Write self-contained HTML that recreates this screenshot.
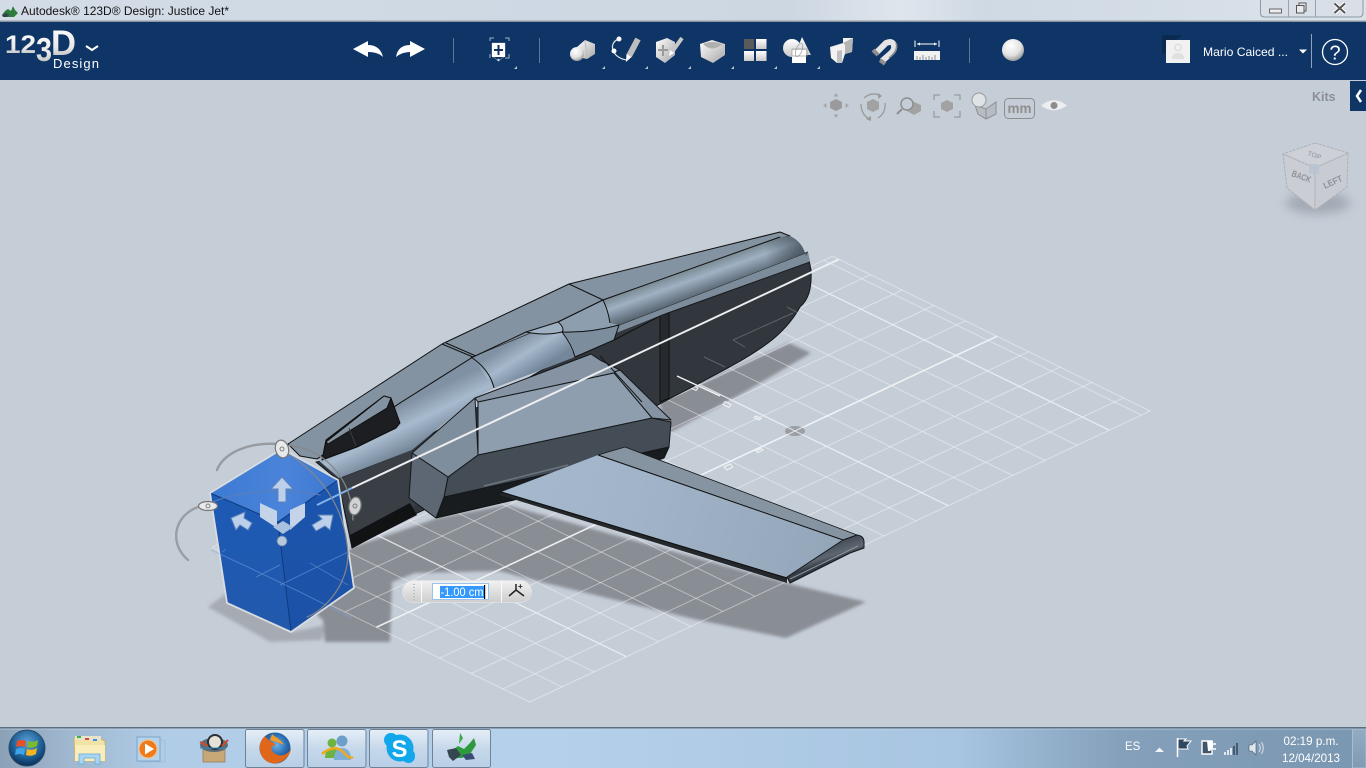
<!DOCTYPE html>
<html lang="es">
<head>
<meta charset="utf-8">
<title>Autodesk 123D Design: Justice Jet</title>
<style>
html,body{margin:0;padding:0;width:1366px;height:768px;overflow:hidden;background:#c5cdd7}
svg{display:block;font-family:"Liberation Sans",sans-serif}
</style>
</head>
<body>
<svg width="1366" height="768" viewBox="0 0 1366 768" xmlns="http://www.w3.org/2000/svg">
<defs>
<linearGradient id="tb" x1="0" x2="1" y1="0" y2="0"><stop offset="0" stop-color="#d3dce6"/><stop offset=".2" stop-color="#d0dae5"/><stop offset=".58" stop-color="#cdd7e2"/><stop offset=".66" stop-color="#dfe5ec"/><stop offset=".72" stop-color="#cfd9e4"/><stop offset="1" stop-color="#dbe3ea"/></linearGradient>
<linearGradient id="task" x1="0" x2="1" y1="0" y2="0"><stop offset="0" stop-color="#8ba1b8"/><stop offset=".05" stop-color="#9fb7cf"/><stop offset=".12" stop-color="#b0cce7"/><stop offset=".4" stop-color="#b5d0ea"/><stop offset=".7" stop-color="#a8c5e1"/><stop offset=".82" stop-color="#84a0bb"/><stop offset="1" stop-color="#7a97b1"/></linearGradient>
<linearGradient id="btn" x1="0" x2="0" y1="0" y2="1"><stop offset="0" stop-color="#e6eff8"/><stop offset=".5" stop-color="#c6d8ea"/><stop offset="1" stop-color="#b8cfe6"/></linearGradient>
<linearGradient id="logo" x1="0" x2="0" y1="0" y2="1"><stop offset="0" stop-color="#fff"/><stop offset=".6" stop-color="#e8e8e8"/><stop offset="1" stop-color="#a8a8a8"/></linearGradient>
<linearGradient id="wg" x1="0" x2="1" y1="0" y2="1"><stop offset="0" stop-color="#fff"/><stop offset="1" stop-color="#a6a6a6"/></linearGradient>
<linearGradient id="wv" x1="0" x2="0" y1="0" y2="1"><stop offset="0" stop-color="#fff"/><stop offset="1" stop-color="#c8c8c8"/></linearGradient>
<radialGradient id="sph" cx=".4" cy=".3" r=".75"><stop offset="0" stop-color="#fff"/><stop offset=".6" stop-color="#e2e2e2"/><stop offset="1" stop-color="#8e8e8e"/></radialGradient>
<linearGradient id="band1" gradientUnits="userSpaceOnUse" x1="395" y1="408" x2="415" y2="450"><stop offset="0" stop-color="#7f91a2"/><stop offset=".45" stop-color="#a8bace"/><stop offset="1" stop-color="#6f8193"/></linearGradient>
<linearGradient id="band2" gradientUnits="userSpaceOnUse" x1="515" y1="340" x2="535" y2="372"><stop offset="0" stop-color="#7f91a2"/><stop offset=".45" stop-color="#a6b8cb"/><stop offset="1" stop-color="#74869a"/></linearGradient>
<linearGradient id="band3" gradientUnits="userSpaceOnUse" x1="690" y1="268" x2="700" y2="296"><stop offset="0" stop-color="#76878f"/><stop offset=".4" stop-color="#9fb1c3"/><stop offset="1" stop-color="#55626e"/></linearGradient>
<linearGradient id="bandend" gradientUnits="userSpaceOnUse" x1="765" y1="255" x2="806" y2="245"><stop offset="0" stop-color="#3a444e" stop-opacity="0"/><stop offset="1" stop-color="#3a444e" stop-opacity=".75"/></linearGradient>
<linearGradient id="wing" gradientUnits="userSpaceOnUse" x1="520" y1="470" x2="830" y2="560"><stop offset="0" stop-color="#a5b8cd"/><stop offset=".35" stop-color="#a2b4c9"/><stop offset="1" stop-color="#94a6b9"/></linearGradient>
<linearGradient id="tip" gradientUnits="userSpaceOnUse" x1="850" y1="535" x2="856" y2="553"><stop offset="0" stop-color="#3f4751"/><stop offset=".7" stop-color="#5d6772"/><stop offset="1" stop-color="#343a42"/></linearGradient>
<linearGradient id="inp" x1="0" x2="0" y1="0" y2="1"><stop offset="0" stop-color="#f2f2f2"/><stop offset="1" stop-color="#cdcdcd"/></linearGradient>
<linearGradient id="ctop" x1="0" x2="1" y1="0" y2="0"><stop offset="0" stop-color="#3d7ad2"/><stop offset=".6" stop-color="#4a84da"/><stop offset="1" stop-color="#3c76cf"/></linearGradient>
<linearGradient id="cleft" x1="0" x2="0" y1="0" y2="1"><stop offset="0" stop-color="#1d5ab5"/><stop offset="1" stop-color="#2259ac"/></linearGradient>
<linearGradient id="cright" x1="0" x2="0" y1="0" y2="1"><stop offset="0" stop-color="#1b55ad"/><stop offset="1" stop-color="#1c52a6"/></linearGradient>
<radialGradient id="orb" cx=".5" cy=".35" r=".65"><stop offset="0" stop-color="#5ba3d8"/><stop offset=".65" stop-color="#1c5d94"/><stop offset="1" stop-color="#0b2f56"/></radialGradient>
<radialGradient id="fox" cx=".55" cy=".4" r=".6"><stop offset="0" stop-color="#6fb3e6"/><stop offset=".55" stop-color="#2a6db2"/><stop offset="1" stop-color="#173f7a"/></radialGradient>
<linearGradient id="sd" x1="0" x2="0" y1="0" y2="1"><stop offset="0" stop-color="#93acc4"/><stop offset="1" stop-color="#7f9ab3"/></linearGradient>
<filter id="b2" x="-20%" y="-20%" width="140%" height="140%"><feGaussianBlur stdDeviation="1.6"/></filter>
<filter id="b5" x="-40%" y="-40%" width="180%" height="180%"><feGaussianBlur stdDeviation="5"/></filter>
</defs>

<!-- viewport -->
<rect x="0" y="80" width="1366" height="648" fill="#c5cdd7"/>

<!-- shadows -->
<g filter="url(#b2)">
<path d="M350,548 438,518 507,505 786,583 866,602 786,638 698,620 533,580 500,571 415,573 392,582 390,642 325,642 323,620 300,600Z" fill="#898d94"/>
<path d="M660,402 789,343 811,353 743,393 671,432 664,430Z" fill="#898d94"/>
<path d="M208,607 228,592 292,632 325,625 322,640 270,642Z" fill="#a6abb3"/>
</g>

<!-- grid minor -->
<g stroke="#fff" stroke-opacity=".42" stroke-width="1" fill="none">
<path d="M832.6,256.2 1150.2,411M823.9,260.3 1141.5,415.1M759.5,290.5 1077.1,445.3M727.3,305.6 1044.9,460.4M695.1,320.7 1012.7,475.5M662.9,335.8 980.5,490.6M598.5,366 916.1,520.8M566.3,381.1 883.9,535.9M534.1,396.2 851.7,551M501.9,411.3 819.5,566.1M437.5,441.5 755.1,596.3M405.3,456.6 722.9,611.4M373.1,471.7 690.7,626.5M340.9,486.8 658.5,641.6M276.5,517 594.1,671.8M244.3,532.1 561.9,686.9M212.1,547.2 529.7,702"/>
<path d="M212.1,547.2 832.6,256.2M250,565.7 870.5,274.7M281.6,581.1 902.1,290.1M313.2,596.5 933.7,305.5M344.8,611.9 965.3,320.9M408,642.7 1028.5,351.7M439.6,658.1 1060.1,367.1M471.2,673.5 1091.7,382.5M502.8,688.9 1123.3,397.9M529.7,702 1150.2,411"/>
</g>
<!-- grid major -->
<g stroke="#f2f4f6" stroke-opacity=".8" fill="none">
<path d="M791.7,275.4 1109.3,430.2M630.7,350.9 948.3,505.7M469.7,426.4 787.3,581.2M308.7,501.9 626.3,656.7" stroke-width="1.300"/>
<path d="M376.4,627.3 996.9,336.3" stroke-width="1.600" stroke-opacity=".95"/>
</g>
<!-- axis labels -->
<g fill="none" stroke="#f2f4f6" stroke-width="1">
<path d="M693,385.500 l5,2.500 -2,2.500 -5,-2.500z"/>
<path d="M725,401.500 l6,3 -2,3 -6,-3z"/>
<path d="M756,416 l5,2.500 -2,1.500 -5,-2.500z"/>
<path d="M756,451 l5,-2.500 2,1.500 -5,2.500z"/>
<path d="M724,467 l6,-3 3,3 -6,3z"/>
</g>
<ellipse cx="795" cy="431" rx="10" ry="5" fill="#9b9fa5"/>
<path d="M785,426 805,436M785,436 805,426" stroke="#dfe3e7" stroke-width="1"/>

<!-- JET -->
<g stroke-linejoin="round">
<!-- dark hull -->
<path d="M316,462 L412,445 620,325 808,255 L811,270 C812,290 808,300 800,307 C790,325 776,337 768,343 C745,360 715,375 671,398 L652,408 417,513 352,548 338,480Z" fill="#31373d" stroke="#14171a" stroke-width="1"/>
<path d="M338,480 412,450 430,480 417,505 351,535Z" fill="#3a3f46"/>
<path d="M350,535 410,503 417,515 352,548Z" fill="#101214"/>
<path d="M660,315 669,312 669,398 660,402Z" fill="#262a2f" stroke="#111" stroke-width="1"/>
<path d="M614,340 660,316" stroke="#111" stroke-width="1" fill="none"/>
<path d="M619,325 808,252 810,262 669,312 616,333Z" fill="#7c8c9a"/>
<path d="M619,325 808,252" stroke="#222" stroke-width="1" fill="none"/>
<path d="M660,316 810,262" stroke="#1a1d20" stroke-width="1" fill="none"/>
<path d="M704,357 725,367M733,340 793,313M787,307 798,313M733,340 745,347" stroke="#fff" stroke-opacity=".22" stroke-width="1" fill="none"/>
<path d="M677,376 720,396" stroke="#f2f4f6" stroke-width="1.400" fill="none"/>

<!-- upper flat -->
<path d="M288,444 442,344 569,284 780,232 790,236 780,238 603,300 558,322 473,357 400,403 317,459 300,456Z" fill="#8493a1" stroke="#111" stroke-width="1"/>
<!-- rounded band -->
<path d="M317,459 400,403 473,357 494,388 475,398 412,450 339,478Z" fill="url(#band1)"/>
<path d="M473,357 558,322 575,357 494,388Z" fill="url(#band2)"/>
<path d="M558,322 603,300 610,323 619,325 614,340 575,357Z" fill="#8d9eae"/>
<path d="M603,300 780,237 790,236 C798,240 803,245 806,256 L808,252 619,325 610,323Z" fill="url(#band3)"/>
<path d="M603,300 780,237 790,236 C798,240 803,245 806,256 L808,252 619,325 610,323Z" fill="url(#bandend)"/>
<path d="M526,332 558,322 C563,326 564,330 562,332 Q545,336 526,332Z" fill="#9fb0c1" stroke="#111" stroke-width="1"/>
<path d="M562,332 Q590,333 619,325 L614,340 575,357 Q572,345 562,332Z" fill="#7c8d9d" stroke="#111" stroke-width="1"/>
<path d="M558,322 603,300M442,344 473,357 M446,343 476,356M471,357 Q490,370 494,388M569,284 603,300 Q608,310 610,323" fill="none" stroke="#111" stroke-width="1"/>
<path d="M317,459 400,403 473,357 526,332M603,300 780,237" fill="none" stroke="#111" stroke-width="1"/>
<!-- cockpit -->
<path d="M326,440 384,396 391,398 400,423 396,428 357,447 322,460Z" fill="#1c1e21" stroke="#0b0c0d" stroke-width="1"/>
<path d="M326,442 384,396 391,398 387,408 328,444Z" fill="#8493a1" stroke="#111" stroke-width="1"/>
<path d="M349,428 356,446" stroke="#3c4045" stroke-width="1" fill="none"/>

<!-- wing root -->
<path d="M444,497 669,447 664,458 600,480 436,518Z" fill="#191c1f" stroke="#0f1113" stroke-width="1"/>
<path d="M478,455 652,418 671,422 669,447 444,497 448,477Z" fill="#444c56" stroke="#14171a" stroke-width="1"/>
<path d="M475,398 591,354 600,360 620,370 671,420 652,418 614,373 478,402Z" fill="#8593a2" stroke="#14171a" stroke-width="1"/>
<path d="M478,402 614,373 652,418 478,455Z" fill="#8f9eae" stroke="#14171a" stroke-width="1"/>
<path d="M600,356 642,402M614,372 620,370" stroke="#14171a" stroke-width="1" fill="none"/>
<path d="M475,398 478,455 448,477 412,453Z" fill="#7f8e9c" stroke="#14171a" stroke-width="1"/>
<path d="M412,453 448,477 444,497 436,518 409,498Z" fill="#5d6773" stroke="#14171a" stroke-width="1"/>
<path d="M484,486 568,465" stroke="#6c747e" stroke-width="1.500" fill="none"/>

<!-- wing -->
<path d="M501,492 787,578 787,583 500,495Z" fill="#24282c"/>
<path d="M598,455 625,447 857,535 843,540Z" fill="#8694a2" stroke="#14171a" stroke-width=".8"/>
<path d="M501,492 598,455 843,540 787,577Z" fill="url(#wing)"/>
<path d="M598,455 843,540" stroke="#111" stroke-width="1" fill="none"/>
<path d="M501,492 787,578" stroke="#111" stroke-width="1.200" fill="none"/>
<path d="M843,540 857,535 Q864,536 864,542 L864,548 850,553 790,583 787,577Z" fill="url(#tip)" stroke="#14171a" stroke-width="1"/>
<path d="M790,579 858,546" stroke="#8a939c" stroke-width="1" fill="none"/>
</g>

<!-- bright axis over jet -->
<path d="M838.9,259.3 352,488" stroke="#eceef0" stroke-width="2" fill="none"/>

<!-- blue cube -->
<g stroke-linejoin="round">
<path d="M282,449 338,480 278,522 210,493Z" fill="url(#ctop)"/>
<path d="M210,493 278,522 291,632 227,603Z" fill="url(#cleft)"/>
<path d="M278,522 338,480 354,588 291,632Z" fill="url(#cright)"/>
<path d="M210,493 278,522 338,480M278,522 291,632" stroke="#0f3a7d" stroke-width="1" fill="none"/>
<path d="M282,449 338,480 354,588 291,632 227,603 210,493Z" fill="none" stroke="#d9dde2" stroke-width="1.800"/>
<path d="M317,505 352,488" stroke="#84b2ee" stroke-width="2" fill="none"/>
<path d="M211,550 250,568 300,592 352,618M222,552 226,549M280,565 256,577M280,585 348,552M310,563 348,585" stroke="#7fa8e0" stroke-opacity=".45" stroke-width="1" fill="none"/>
</g>

<!-- manipulator arcs -->
<g fill="none" stroke-linecap="round">
<path d="M217,470 C224,452 250,442 278,444" stroke="#8b8e92" stroke-width="2.400" stroke-opacity=".8" stroke-dasharray="2 .6"/>
<path d="M198,507 C172,517 170,545 188,560" stroke="#8b8e92" stroke-width="2.400" stroke-opacity=".75" stroke-dasharray="2 .6"/>
<path d="M285,445 C325,448 352,478 353,520" stroke="#85878a" stroke-width="1.300"/>
<path d="M282,450 C325,475 345,510 348,553 C348,585 325,610 307,617" stroke="#85878a" stroke-width="1.200"/>
<path d="M210,503 C240,490 285,488 320,495" stroke="#5c7fb8" stroke-width="1"/>
</g>
<g stroke="#777" stroke-width="1.200" fill="#e8e9eb">
<ellipse cx="282" cy="449" rx="6.500" ry="9" transform="rotate(-15 282 449)"/>
<ellipse cx="208" cy="506" rx="9.500" ry="4.500"/>
<ellipse cx="355" cy="506" rx="6" ry="9" transform="rotate(10 355 506)" fill="#d0d2d4"/>
</g>
<g fill="none" stroke="#666" stroke-width=".8"><circle cx="282" cy="449" r="2"/><circle cx="208" cy="506" r="2"/><circle cx="355" cy="506" r="2"/></g>

<!-- move arrows -->
<g fill="#bcd0ec" stroke="#5f82b6" stroke-width="1">
<path d="M282,477 L293,489 286,489 286,502 278,502 278,489 271,489Z"/>
<path d="M231,518 L245,512 244,518 252,523 248,530 240,525 236,530Z"/>
<path d="M333,515 L330,530 325,526 316,531 312,525 322,519 318,515Z"/>
</g>
<g fill="#c4d3e8">
<path d="M260,503 277,511 277,528 260,517Z"/>
<path d="M305,503 290,510 290,530 305,517Z"/>
<path d="M283,521 293,527 283,534 273,527Z" fill="#a9c0df"/>
<circle cx="282" cy="541" r="5" fill="#b7c7dc" stroke="#5f7ca8" stroke-width=".8"/>
</g>

<!-- input box -->
<rect x="402.500" y="580.500" width="129" height="22" rx="11" fill="url(#inp)" stroke="#dfe2e6" stroke-width=".8"/>
<path d="M421.500,581 V602M501.500,581 V602" stroke="#fafafa" stroke-width="1"/>
<path d="M414,584 V600" stroke="#bdbdbd" stroke-width="2" stroke-dasharray="1 2"/>
<rect x="432.500" y="583.500" width="56" height="16" fill="#fff" stroke="#9cc3ea" stroke-width="1"/>
<rect x="440" y="586" width="44" height="12" fill="#3399ff"/>
<text x="440.500" y="596" font-size="11.500" fill="#fff" textLength="43" lengthAdjust="spacingAndGlyphs">-1.00 cm</text>
<rect x="484" y="585" width="1.200" height="14" fill="#000"/>
<path d="M516,590 V584M516,590 L509,596M516,590 L524,596" stroke="#222" stroke-width="1.500" fill="none"/>
<text x="518" y="589" font-size="8" font-weight="bold" fill="#222">+</text>

<!-- title bar -->
<rect x="0" y="0" width="1366" height="21" fill="url(#tb)"/>
<rect x="0" y="20.500" width="1366" height="1.500" fill="#8c96a2"/>
<path d="M2,15 5,11 8,9 11,11 13,6 15,10 18,13 14,17 6,17Z" fill="#2f7d3a"/>
<path d="M2,15 6,13 9,15 7,17 3,17Z" fill="#35424c"/>
<text x="21" y="15" font-size="12" fill="#111" textLength="208" lengthAdjust="spacingAndGlyphs">Autodesk® 123D® Design: Justice Jet*</text>
<path d="M1260.500,0 V13 Q1260.500,17 1265,17 H1359 Q1363,17 1363,13 V0" fill="#d8dfe7" stroke="#8e98a3"/>
<path d="M1288.500,0 V17M1315.500,0 V17" stroke="#98a2ad"/>
<rect x="1269.500" y="9" width="12" height="4" fill="#eee" stroke="#666"/>
<rect x="1299" y="3" width="7" height="8" fill="#e8ecf0" stroke="#555"/>
<rect x="1296.500" y="5.500" width="7.500" height="7.500" fill="#e8ecf0" stroke="#555"/>
<path d="M1334.500,3.500 L1345,13M1345,3.500 L1334.500,13" stroke="#fff" stroke-width="4"/>
<path d="M1334.500,3.500 L1345,13M1345,3.500 L1334.500,13" stroke="#555" stroke-width="2"/>

<!-- toolbar -->
<rect x="0" y="22" width="1366" height="58" fill="#0e3566"/>
<text x="5" y="53" font-size="25" font-weight="bold" fill="url(#logo)" textLength="31" lengthAdjust="spacingAndGlyphs">12</text>
<text x="36" y="61" font-size="33" font-weight="bold" fill="url(#logo)" textLength="16" lengthAdjust="spacingAndGlyphs">3</text>
<text x="51" y="55" font-size="35" font-weight="bold" fill="url(#logo)" textLength="25" lengthAdjust="spacingAndGlyphs">D</text>
<path d="M86,46 92,50 98,46" fill="none" stroke="#fff" stroke-width="2"/>
<text x="53" y="68" font-size="13" fill="#fff" letter-spacing="1" textLength="47">Design</text>

<path d="M353,49 L368,41 V45 Q380,45 383,57 Q378,52 368,52 V57Z" fill="#fff"/>
<path d="M425,49 L410,41 V45 Q398,45 396,57 Q402,52 410,52 V57Z" fill="#fff"/>
<path d="M453.500,38 V63M539.500,38 V63M969.500,38 V63" stroke="#5d7897" stroke-width="1"/>

<!-- snap -->
<path d="M490,41 V38 H494M505,38 H509 V41M509,54 V58 H505M490,54 V58" fill="none" stroke="#9fb2c8" stroke-width="1"/>
<path d="M492,43 H505 V56 L498.500,61 492,56Z" fill="none" stroke="#7f97b3" stroke-width=".6"/>
<rect x="492" y="43" width="13" height="14" fill="#fff"/>
<path d="M498.500,45 V55M494,50 H503" stroke="#0e3566" stroke-width="2"/>
<circle cx="498.500" cy="60" r="1.200" fill="#cfd8e3"/>

<!-- icon: primitives -->
<path d="M577,47 585,40 595,44 595,54 587,59 577,57Z" fill="url(#wg)"/>
<path d="M585,40 587,59" stroke="#bbb" stroke-width="1"/>
<circle cx="577" cy="54" r="7" fill="url(#sph)"/>
<!-- sketch -->
<path d="M619,39 C608,42 611,58 627,60" fill="none" stroke="#e8e8e8" stroke-width="1.200"/>
<circle cx="619" cy="39" r="2.500" fill="#fff"/><circle cx="614" cy="51" r="2.500" fill="#fff"/>
<path d="M638,39 L629,56" stroke="#bdbdbd" stroke-width="6"/>
<path d="M626.500,54 L631.500,57 626,62Z" fill="#fff"/>
<!-- construct -->
<path d="M656,42 667,38 675,42 675,55 665,63 656,57Z" fill="url(#wg)"/>
<path d="M658,50 H668M663,45 V56" stroke="#9a9a9a" stroke-width="2"/>
<path d="M682,38 L672,52" stroke="#c8c8c8" stroke-width="4"/>
<path d="M670,50 L674,53 669,56Z" fill="#fff"/>
<!-- modify -->
<path d="M700,44 712,40 725,44 725,55 713,63 701,57Z" fill="url(#wg)"/>
<path d="M703,44 Q712,53 722,44 Q712,40 703,44Z" fill="#b0b0b0"/>
<!-- pattern -->
<rect x="744" y="39" width="10" height="10" fill="#5a5a5a"/>
<rect x="756" y="39" width="10.500" height="10" fill="url(#wv)"/>
<rect x="744" y="51" width="10" height="10" fill="url(#wv)"/>
<rect x="756" y="51" width="10.500" height="10" fill="url(#wv)"/>
<!-- combine -->
<circle cx="792" cy="48" r="9" fill="url(#wv)"/>
<path d="M802,37 L811,55 H795Z" fill="url(#wv)"/>
<rect x="792" y="50" width="14" height="13" fill="#fff"/>
<rect x="792" y="49" width="15" height="7" fill="none" stroke="#999" stroke-width=".7"/>
<ellipse cx="799" cy="50" rx="3" ry="7" fill="none" stroke="#999" stroke-width=".7" transform="rotate(20 799 50)"/>
<!-- group -->
<path d="M830,47 843,43 843,38 853,38 852,52 845,54 842,63 837,63 831,58Z" fill="#f2f2f2"/>
<path d="M843,43 847,41 853,38 852,52 845,54 845,45Z" fill="#b4b4b4"/>
<path d="M837,51 842,50 842,63 837,63Z" fill="#c0c0c0"/>
<!-- magnet -->
<path d="M876,53 L886,43 Q893,40 894,46 Q895,50 890,54 L882,61" fill="none" stroke="#e4e4e4" stroke-width="6"/>
<path d="M873,50 L878,55M880,60 L885,64" stroke="#8e8e8e" stroke-width="4"/>
<path d="M889,58 Q899,50 896,43" fill="none" stroke="#8a8a8a" stroke-width="1.500"/>
<!-- measure -->
<path d="M915,40.500 V47M939,40.500 V47M917,44 H937" stroke="#fff" stroke-width="1" fill="none"/>
<path d="M917,44 920,42.500 V45.500ZM937,44 934,42.500 V45.500Z" fill="#fff"/>
<rect x="914" y="51" width="26" height="9" fill="#f2f2f2"/>
<path d="M917,60 V56M920,60 V57M923,60 V55M926,60 V57M929,60 V56M932,60 V57M935,60 V55" stroke="#777" stroke-width=".8"/>
<!-- material -->
<circle cx="1013" cy="50" r="11" fill="url(#sph)"/>
<!-- corner ticks -->
<g fill="#b9c6d6">
<path d="M517,66 V69 H514Z"/><path d="M605,66 V69 H602Z"/><path d="M648,66 V69 H645Z"/><path d="M691,66 V69 H688Z"/><path d="M734,66 V69 H731Z"/><path d="M777,66 V69 H774Z"/><path d="M820,66 V69 H817Z"/>
</g>

<!-- user -->
<path d="M1162,35 H1182 L1176,40 1166,52 1162,55Z" fill="#0a2a50"/>
<rect x="1166" y="40" width="24" height="23" fill="#f1f1f1"/>
<circle cx="1178" cy="47.500" r="3.200" fill="none" stroke="#dfdfdf" stroke-width="1.600"/>
<path d="M1172,59 Q1172,53 1178,53 Q1184,53 1184,59Z" fill="#dfdfdf"/>
<text x="1203" y="56" font-size="12" fill="#fff" textLength="85" lengthAdjust="spacingAndGlyphs">Mario Caiced ...</text>
<path d="M1299,49.500 H1307 L1303,53.500Z" fill="#fff"/>
<path d="M1311.500,34 V68" stroke="#8ea3bc" stroke-width="1"/>
<circle cx="1335" cy="52" r="12.500" fill="none" stroke="#fff" stroke-width="1.300"/>
<text x="1335" y="59.500" font-size="20" fill="#fff" text-anchor="middle">?</text>

<!-- view controls -->
<g fill="#9a9a9a">
<path d="M836,99 842,102 842,108 836,111 830,108 830,102Z"/>
<path d="M836,93 838.500,96.500 H833.500ZM836,118 838.500,114.500 H833.500ZM823,105.500 826.500,103 V108ZM849,105.500 845.500,103 V108Z" fill="#a6a6a6"/>
<path d="M873,99 879,102 879,109 873,112 867,109 867,102Z" fill="#a2a2a2"/>
<path d="M864,98 Q872,91 881,96M885,103 Q886,113 878,118 M869,119 Q861,114 861,104" fill="none" stroke="#9a9a9a" stroke-width="1.300"/>
<path d="M882,96 878,93 878,99ZM866,119 871,116 871,121Z"/>
<path d="M914,102 921,105 921,111 914,115 907,111 907,105Z" fill="#a2a2a2"/>
<circle cx="907" cy="104" r="6" fill="#c5cdd7" stroke="#8e8e8e" stroke-width="1.500"/>
<path d="M902,109 L897,114" stroke="#8e8e8e" stroke-width="2"/>
<path d="M947,100 953,103 953,109 947,112 941,109 941,103Z" fill="#a2a2a2"/>
<path d="M934,100 V95 H940M954,95 H960 V100M960,111 V117 H954M940,117 H934 V111" fill="none" stroke="#8e8e8e" stroke-width="1"/>
</g>
<path d="M975,105 986,109 996,102 996,114 986,119 978,114Z" fill="#b6bcc4" stroke="#8e8e8e" stroke-width="1"/>
<path d="M986,109 986,119" stroke="#8e8e8e" stroke-width="1"/>
<circle cx="979" cy="100" r="7" fill="#dfe2e6" stroke="#9a9a9a" stroke-width="1"/>
<rect x="1004.500" y="98.500" width="30" height="20" rx="4" fill="none" stroke="#8e8e8e" stroke-width="1"/>
<text x="1019.500" y="113" font-size="13.500" font-weight="bold" fill="#8e8e8e" text-anchor="middle">mm</text>
<path d="M1041,105.500 Q1054,95 1067,105.500 Q1054,115 1041,105.500Z" fill="#eceef0"/>
<circle cx="1054" cy="105.500" r="3.500" fill="#8c8c8c"/>

<!-- kits -->
<text x="1312" y="101" font-size="12.500" font-weight="bold" fill="#8c9096">Kits</text>
<rect x="1350" y="81" width="16" height="30" fill="#0e3566"/>
<path d="M1361,90 1357,96 1361,102" fill="none" stroke="#fff" stroke-width="2.500"/>

<!-- view cube -->
<ellipse cx="1318" cy="203" rx="32" ry="11" fill="#8a929c" opacity=".6" filter="url(#b5)"/>
<path d="M1315,143 1348,153 1315,168 1283,154Z" fill="#cdd1d7" stroke="#aeb2b8" stroke-width="1" stroke-dasharray="3 1"/>
<path d="M1283,154 1315,168 1315,210 1287,188Z" fill="#cacdd3" stroke="#aeb2b8" stroke-width="1" stroke-dasharray="3 1"/>
<path d="M1348,153 1315,168 1315,210 1347,187Z" fill="#c8cbd1" stroke="#aeb2b8" stroke-width="1" stroke-dasharray="3 1"/>
<rect x="1309" y="164" width="10" height="10" fill="#b9c3d2" opacity=".8"/>
<text transform="translate(1291 176) rotate(20)" font-size="9" font-weight="bold" fill="#8e9298" textLength="20" lengthAdjust="spacingAndGlyphs">BACK</text>
<text transform="translate(1325 189) rotate(-25)" font-size="9" font-weight="bold" fill="#8e9298" textLength="20" lengthAdjust="spacingAndGlyphs">LEFT</text>
<text transform="translate(1307 155) rotate(20)" font-size="7" font-weight="bold" fill="#a0a4aa" textLength="14" lengthAdjust="spacingAndGlyphs">TOP</text>

<!-- taskbar -->
<rect x="0" y="727" width="1366" height="41" fill="url(#task)"/>
<rect x="0" y="727" width="1366" height="1.500" fill="#5c6d7e"/>
<rect x="0" y="728.500" width="1366" height="1" fill="#c9dcee" opacity=".6"/>

<!-- start orb -->
<circle cx="27" cy="748" r="18" fill="url(#orb)" stroke="#2a4a68" stroke-width="1"/>
<path d="M17,741 Q21,739 26,741 L25,747 Q21,745 16,747Z" fill="#e8502a"/>
<path d="M28,741 Q33,743 38,740 L37,746 Q32,749 27,747Z" fill="#7cbb2e"/>
<path d="M16,749 Q21,747 25,749 L24,755 Q20,753 15,755Z" fill="#3ea4e6"/>
<path d="M27,749 Q32,751 37,748 L36,754 Q31,757 26,755Z" fill="#f6b420"/>

<!-- explorer -->
<path d="M74,738 H98 L105,741 V761 H75Z" fill="#f1e2a6" stroke="#c8b571" stroke-width="1"/>
<rect x="75" y="736" width="26" height="4" fill="#e9e2cd"/>
<rect x="77" y="736" width="4" height="2" fill="#3cb043"/><rect x="85" y="738" width="4" height="2" fill="#d84b3a"/><rect x="93" y="739" width="4" height="2" fill="#3e8ee0"/>
<path d="M75,745 H105 V761 H75Z" fill="#f8edbb"/>
<path d="M79,764 V754 H100 V764 H95 V758 H84 V764Z" fill="#a8d6f2" stroke="#6aa8d6" stroke-width=".8"/>
<!-- media player -->
<rect x="137" y="737" width="23" height="24" fill="#b6d3ec" stroke="#7ea5cb" stroke-width="1"/>
<path d="M160,739 165,741 V762 L141,762" fill="none" stroke="#9fc0dd" stroke-width="1"/>
<circle cx="148" cy="749" r="9" fill="#ee7a1b" stroke="#f9c48a" stroke-width="1"/>
<path d="M145,743.500 L154,749 145,754.500Z" fill="#fff"/>
<!-- game box -->
<rect x="203" y="749" width="22" height="13" fill="#c9a878" stroke="#8f7550" stroke-width=".7"/>
<ellipse cx="214" cy="745" rx="14" ry="7" fill="#5b6c78"/>
<circle cx="215" cy="742" r="7" fill="#e5e1d8" stroke="#2a2e33" stroke-width="2"/>
<path d="M200,742 208,746M222,746 228,740" stroke="#d04a2a" stroke-width="2"/>
<path d="M200,748 H226" stroke="#2a8fc0" stroke-width="1"/>

<!-- pinned buttons -->
<g stroke="#6f8296" stroke-width="1" fill="url(#btn)">
<rect x="245.500" y="729.500" width="58.500" height="38" rx="2"/>
<rect x="307.500" y="729.500" width="58.500" height="38" rx="2"/>
<rect x="369.500" y="729.500" width="58.500" height="38" rx="2"/>
<rect x="432.500" y="729.500" width="58" height="38" rx="2"/>
</g>
<!-- firefox -->
<circle cx="275" cy="748" r="15.500" fill="url(#fox)"/>
<path d="M265,736 C258,742 257,756 268,762 C280,767 290,757 291,749 C287,756 279,757 274,753 C269,749 272,745 276,745 C272,741 268,741 265,736Z" fill="#e0671a"/>
<path d="M272,734 C276,738 281,739 284,745 C279,742 274,742 270,740Z" fill="#f09a2c"/>
<!-- messenger -->
<circle cx="332" cy="743" r="4.500" fill="#6cb33f"/>
<path d="M325,758 Q325,748 332,748 Q339,748 339,758Z" fill="#6cb33f"/>
<circle cx="342" cy="741" r="5.500" fill="#6d9fc9"/>
<path d="M334,760 Q334,748 342,748 Q351,748 351,760Z" fill="#7eaed6"/>
<path d="M322,754 Q336,742 346,755 Q350,759 353,757" fill="none" stroke="#f0a91e" stroke-width="2.500"/>
<!-- skype -->
<circle cx="400" cy="748" r="13.500" fill="#11a7ea"/>
<rect x="384" y="733" width="14" height="14" rx="7" fill="#11a7ea"/>
<rect x="402" y="749" width="13" height="14" rx="6.500" fill="#11a7ea"/>
<text x="399.500" y="757" font-size="24" font-weight="bold" fill="#fff" text-anchor="middle">S</text>
<!-- 123D app icon -->
<path d="M450,752 458,746 464,749 470,743 474,738 476,745 470,754 462,758 454,758Z" fill="#2f9a3c"/>
<path d="M460,733 463,738 459,744Z" fill="#3aa648"/>
<path d="M447,750 456,748 461,755 453,761 449,757Z" fill="#364650"/>
<path d="M462,755 472,753 475,759 466,760Z" fill="#3a4c74"/>

<!-- tray -->
<text x="1125" y="750" font-size="11.500" fill="#fff">ES</text>
<path d="M1155,752 L1159.500,747.500 1164,752Z" fill="#f0f4f8"/>
<path d="M1177.500,738 V757" stroke="#fff" stroke-width="1.500"/>
<path d="M1178,739 H1186 L1184,741 H1191 L1187,746 1188,749 H1178Z" fill="#2e4660" stroke="#fff" stroke-width="1"/>
<path d="M1202,741 H1212 V754 H1202Z" fill="#415468" stroke="#fff" stroke-width="1.400"/>
<path d="M1207,741 H1213 V748 L1210,751 H1208 Z" fill="#fff"/>
<path d="M1213,744 H1216M1213,749 H1216" stroke="#fff" stroke-width="1.500"/>
<g fill="#dfe7ee"><rect x="1224" y="752" width="2" height="3"/><rect x="1227" y="750" width="2" height="5"/><rect x="1230" y="748" width="2" height="7"/></g>
<g fill="#4a5d70"><rect x="1233" y="746" width="2" height="9"/><rect x="1236" y="743" width="2" height="12"/></g>
<path d="M1249,745 H1252 L1256,741 V755 L1252,751 H1249Z" fill="#dfe7ee" stroke="#46596b" stroke-width=".6"/>
<path d="M1259,744 Q1261.500,748 1259,752M1261.500,742 Q1265,748 1261.500,754" fill="none" stroke="#dfe7ee" stroke-width="1"/>
<text x="1311" y="745" font-size="12" fill="#fff" text-anchor="middle" textLength="55" lengthAdjust="spacingAndGlyphs">02:19 p.m.</text>
<text x="1311" y="762" font-size="12" fill="#fff" text-anchor="middle" textLength="58" lengthAdjust="spacingAndGlyphs">12/04/2013</text>
<rect x="1352.500" y="729" width="13.500" height="39" fill="url(#sd)" stroke="#a9bdd1" stroke-width="1"/>
</svg>
</body>
</html>
